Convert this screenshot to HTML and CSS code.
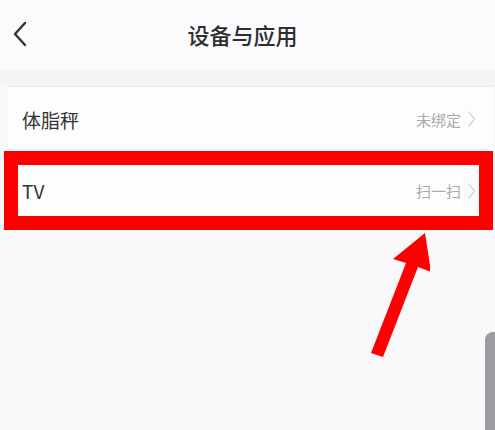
FILE: index.html
```html
<!DOCTYPE html>
<html lang="zh-CN">
<head>
  <meta charset="UTF-8" />
  <meta name="viewport" content="width=device-width, initial-scale=1.0" />
  <title>设备与应用</title>
  <link rel="stylesheet" href="styles.css">
</head>
<body>
  <div class="header">
    <svg class="back" width="16" height="26" viewBox="0 0 16 26">
      <path d="M13 2 L3 13 L13 24" fill="none" stroke="#333" stroke-width="2.4" stroke-linecap="round" stroke-linejoin="round"/>
    </svg>
    <h1>设备与应用</h1>
  </div>
  <div class="band"></div>

  <div class="list">
    <div class="row">
      <span class="name">体脂秤</span>
      <span class="status">未绑定
        <svg class="chev" width="9" height="18" viewBox="0 0 9 18"><path d="M1.5 1.5 L7.5 9 L1.5 16.5" fill="none" stroke="#d2d2d4" stroke-width="1.3"/></svg>
      </span>
    </div>
    <div class="row mark">
      <span class="name">TV</span>
      <span class="status">扫一扫
        <svg class="chev" width="9" height="18" viewBox="0 0 9 18"><path d="M1.5 1.5 L7.5 9 L1.5 16.5" fill="none" stroke="#d2d2d4" stroke-width="1.3"/></svg>
      </span>
    </div>
  </div>

  <svg class="pointer" width="70" height="130" viewBox="360 228 70 130">
    <polygon points="425,233 431,272 418,267 383,357 371,353 406,263 393,259" fill="#fe0000"/>
  </svg>
  <div class="thumb"></div>
</body>
</html>
```

FILE: styles.css
```css
body {
  margin: 0;
  font-family: "Noto Sans CJK SC", "Noto Sans", sans-serif;
  background: #f8f7fa;
  color: #333;
  height: 430px;
  overflow: hidden;
  position: relative;
}
.header {
  height: 70px;
  background: #fbfbfd;
  display: flex;
  align-items: center;
  justify-content: center;
  position: relative;
}
.back {
  position: absolute;
  left: 12px;
  top: 21px;
}
h1 {
  margin: 0 10px 0 0;
  font-size: 22px;
  font-weight: 500;
  color: #2e2e2e;
  padding-bottom: 2px;
}
.band {
  height: 16px;
  background: #f5f4f7;
}
.list {
  background: #fdfdfe;
  border-top: 1px solid #ebeaee;
  margin-left: 8px;
  margin-right: 2px;
}
.row {
  display: flex;
  align-items: center;
  justify-content: space-between;
  height: 64px;
  padding: 0 17px 0 14px;
}
.row.mark {
  height: 51px;
  border: 14px solid #fe0000;
  margin: 0 0 0 -4px;
  padding: 0 3px 0 4px;
}
.name {
  font-size: 19px;
  color: #333;
}
.status {
  font-size: 15px;
  color: #a9a9ab;
  display: flex;
  align-items: center;
  gap: 6px;
}
.chev {
  display: block;
}
.pointer {
  position: absolute;
  left: 360px;
  top: 228px;
}
.thumb {
  position: absolute;
  left: 485px;
  top: 332px;
  width: 12px;
  height: 110px;
  background: #9c9b9f;
  border-radius: 8px 0 0 0;
}
```
